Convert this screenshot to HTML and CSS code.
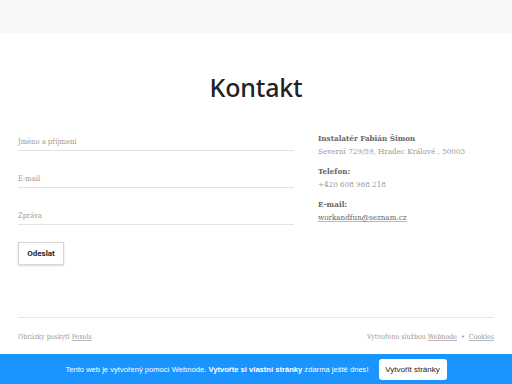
FILE: index.html
```html
<!DOCTYPE html>
<html lang="cs">
<head>
<meta charset="utf-8">
<link rel="stylesheet" href="styles.css">
</head>
<body>
<header class="topbar"></header>
<main class="content">
  <h1 class="title">Kontakt</h1>
  <div class="columns">
    <form class="form">
      <div class="field first"><span class="label">Jméno a příjmení</span></div>
      <div class="field"><span class="label">E-mail</span></div>
      <div class="field"><span class="label">Zpráva</span></div>
      <button type="button" class="submit">Odeslat</button>
    </form>
    <div class="info">
      <p class="strong">Instalatér Fabián Šimon</p>
      <p>Severní 729/59, Hradec Králové , 50003</p>
      <p class="strong gap">Telefon:</p>
      <p>+420 608 968 218</p>
      <p class="strong gap">E-mail:</p>
      <p><a class="link">workandfun@seznam.cz</a></p>
    </div>
  </div>
</main>
<footer class="footer">
  <span>Obrázky poskytl <a class="link">Pexels</a></span>
  <span>Vytvořeno službou <a class="link">Webnode</a> <span class="dot">•</span> <a class="link">Cookies</a></span>
</footer>
<div class="banner">
  <span class="banner-text">Tento web je vytvořený pomocí Webnode. <b>Vytvořte si vlastní stránky</b> zdarma ještě dnes!</span>
  <span class="banner-btn">Vytvořit stránky</span>
</div>
</body>
</html>
```
FILE: styles.css
```css
* { box-sizing: border-box; }
html, body { margin: 0; padding: 0; }
body {
  width: 512px;
  height: 384px;
  overflow: hidden;
  background: #fff;
  font-family: "DejaVu Serif", serif;
  font-stretch: condensed;
  color: #555;
}
.topbar {
  height: 33px;
  background: #f7f6f8;
}
.content {
  padding: 0 18px;
}
.title {
  margin: 38px 0 0;
  height: 31px;
  text-align: center;
  font-family: "Noto Sans", sans-serif;
  font-weight: 500;
  font-size: 25px;
  line-height: 31px;
  padding-top: 1px;
  color: #222;
  letter-spacing: -0.2px;
}
.columns {
  display: flex;
  margin-top: 19px;
  gap: 24px;
}
.form {
  width: 276px;
  display: flex;
  flex-direction: column;
}
.field {
  height: 37px;
  border-bottom: 1px solid #e3e3e3;
  display: flex;
  align-items: flex-end;
  padding-bottom: 3px;
}
.field.first { height: 30px; }
.label {
  font-size: 7.5px;
  color: #999;
  line-height: 10px;
  display: block;
}
.submit {
  align-self: flex-start;
  margin-top: 17px;
  width: 46px;
  height: 23px;
  border: 1px solid #d5d5d5;
  background: #fff;
  box-shadow: 0 1px 2px rgba(0,0,0,0.15);
  font-family: "Roboto", sans-serif;
  font-weight: 700;
  font-size: 8px;
  color: #222;
  padding: 0;
}
.info {
  flex: 1;
  font-size: 8px;
  line-height: 14px;
  color: #999;
  padding-top: 6px;
}
.info p { margin: 0; }
.info p:first-child { margin-top: 4px; }
.info .strong { color: #666; font-weight: 600; }
.info .gap { margin-top: 5px; }
.link { color: #666; text-decoration: underline; text-decoration-color: #bbb; }
.footer {
  margin: 52px 18px 0;
  border-top: 1px solid #e6e6e6;
  height: 37px;
  display: flex;
  justify-content: space-between;
  align-items: center;
  padding-top: 1px;
  font-size: 7px;
  color: #999;
}
.footer .link { color: #999; }
.dot { margin: 0 2px; }
.banner {
  height: 30px;
  background: #1a94ff;
  display: flex;
  align-items: center;
  justify-content: center;
  gap: 10px;
  font-family: "Liberation Sans", Arial, sans-serif;
  font-size: 7.6px;
  color: #fff;
}
.banner-text b { font-weight: 700; }
.banner-btn {
  background: #fff;
  color: #222;
  border-radius: 3px;
  height: 21px;
  width: 68px;
  display: flex;
  align-items: center;
  justify-content: center;
  font-size: 8px;
}
```
